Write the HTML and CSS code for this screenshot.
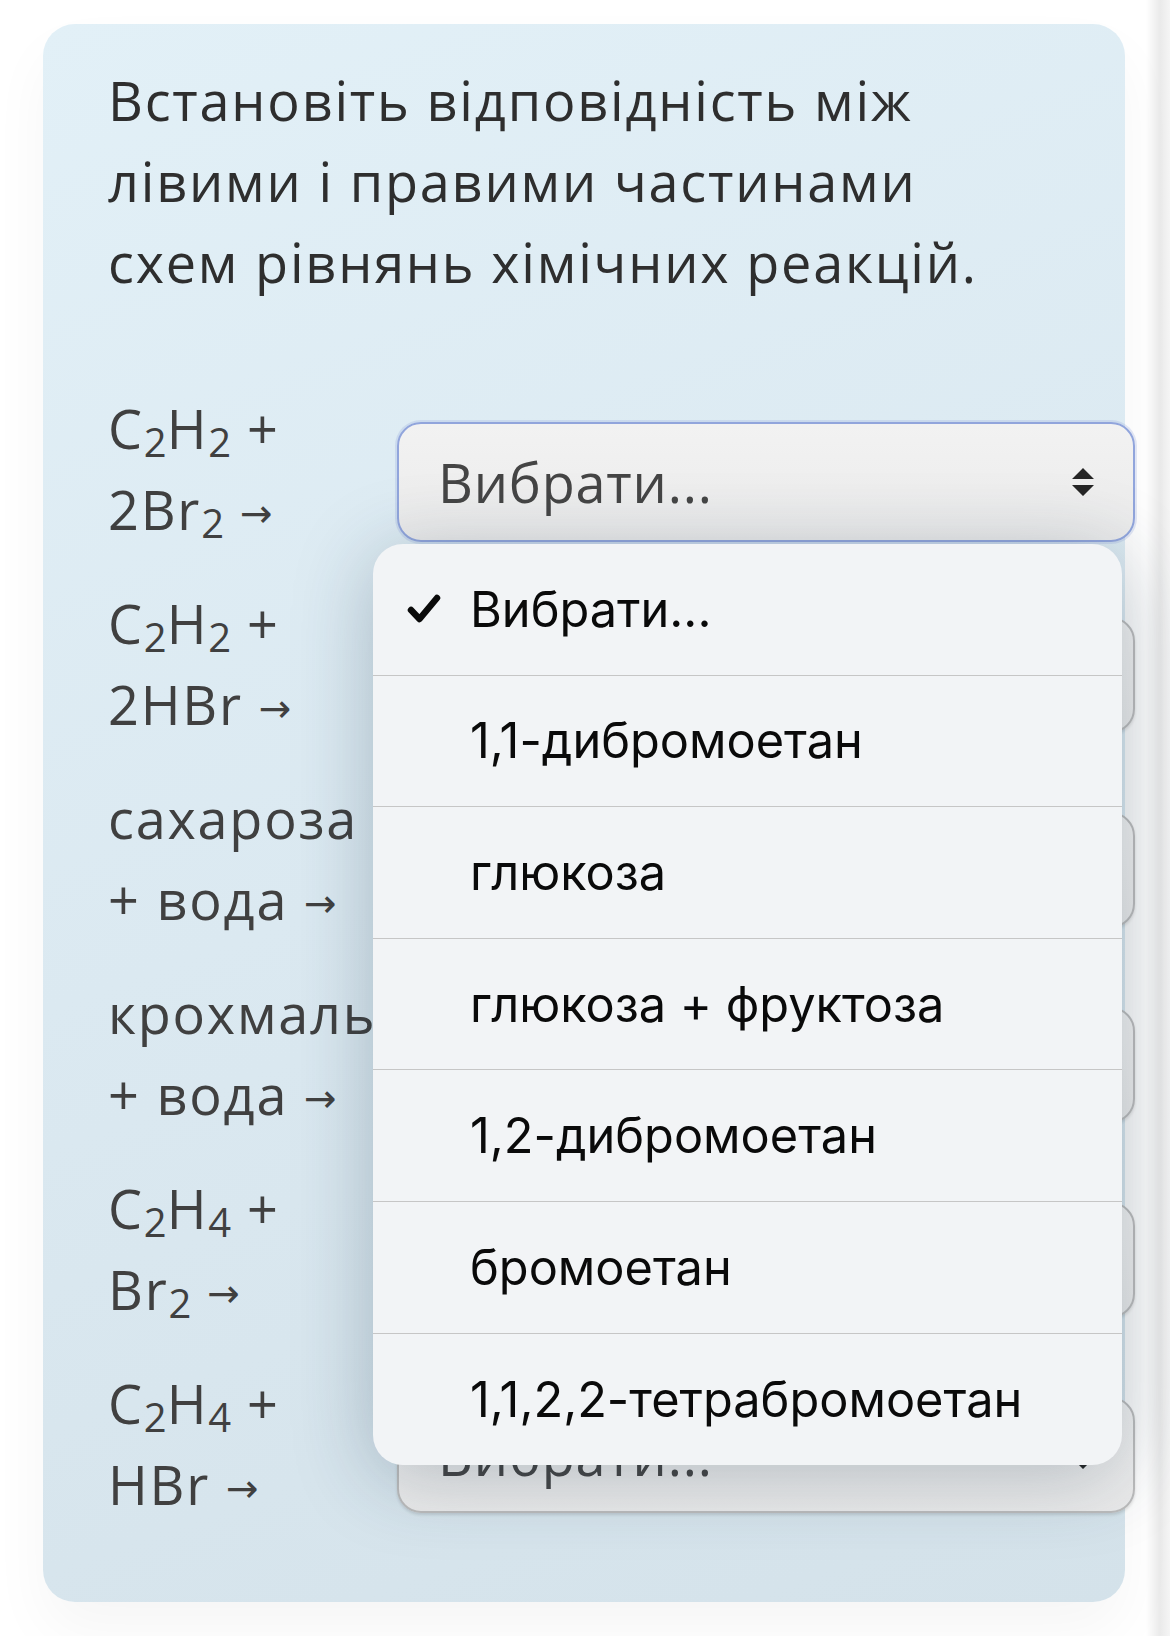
FILE: index.html
```html
<!DOCTYPE html>
<html lang="uk">
<head>
    <meta charset="UTF-8">
    <meta name="viewport" content="width=device-width, initial-scale=1.0">
    <title>Встановіть відповідність</title>
    <link rel="stylesheet" href="styles.css">
</head>
<body>
    <div class="page">
        <div class="card">
            <p class="task">Встановіть відповідність між лівими і правими частинами схем рівнянь хімічних реакцій.</p>

            <div class="pairs">
                <div class="pair">
                    <div class="formula">C<sub>2</sub>H<sub>2</sub> + 2Br<sub>2</sub> <span class="arrow">→</span></div>
                    <div class="select-wrap">
                        <div class="select focused">
                            <span>Вибрати...</span>
                            <svg class="updown" viewBox="0 0 24 30"><path d="M12 1 L23 12 L1 12 Z M1 18 L23 18 L12 29 Z"/></svg>
                        </div>

                        <!-- open picker of the first select -->
                        <ul class="picker">
                            <li class="checked">
                                <svg class="check" viewBox="0 0 34 30"><path d="M4 16 L12.5 25 L30 4"/></svg>
                                Вибрати...
                            </li>
                            <li>1,1-дибромоетан</li>
                            <li>глюкоза</li>
                            <li>глюкоза + фруктоза</li>
                            <li>1,2-дибромоетан</li>
                            <li>бромоетан</li>
                            <li>1,1,2,2-тетрабромоетан</li>
                        </ul>
                    </div>
                </div>

                <div class="pair">
                    <div class="formula">C<sub>2</sub>H<sub>2</sub> + 2HBr <span class="arrow">→</span></div>
                    <div class="select-wrap">
                        <div class="select"><span>Вибрати...</span><svg class="updown" viewBox="0 0 24 30"><path d="M12 1 L23 12 L1 12 Z M1 18 L23 18 L12 29 Z"/></svg></div>
                    </div>
                </div>

                <div class="pair">
                    <div class="formula">сахароза + вода <span class="arrow">→</span></div>
                    <div class="select-wrap">
                        <div class="select"><span>Вибрати...</span><svg class="updown" viewBox="0 0 24 30"><path d="M12 1 L23 12 L1 12 Z M1 18 L23 18 L12 29 Z"/></svg></div>
                    </div>
                </div>

                <div class="pair">
                    <div class="formula">крохмаль + вода <span class="arrow">→</span></div>
                    <div class="select-wrap">
                        <div class="select"><span>Вибрати...</span><svg class="updown" viewBox="0 0 24 30"><path d="M12 1 L23 12 L1 12 Z M1 18 L23 18 L12 29 Z"/></svg></div>
                    </div>
                </div>

                <div class="pair">
                    <div class="formula">C<sub>2</sub>H<sub>4</sub> + Br<sub>2</sub> <span class="arrow">→</span></div>
                    <div class="select-wrap">
                        <div class="select"><span>Вибрати...</span><svg class="updown" viewBox="0 0 24 30"><path d="M12 1 L23 12 L1 12 Z M1 18 L23 18 L12 29 Z"/></svg></div>
                    </div>
                </div>

                <div class="pair">
                    <div class="formula">C<sub>2</sub>H<sub>4</sub> + HBr <span class="arrow">→</span></div>
                    <div class="select-wrap">
                        <div class="select"><span>Вибрати...</span><svg class="updown" viewBox="0 0 24 30"><path d="M12 1 L23 12 L1 12 Z M1 18 L23 18 L12 29 Z"/></svg></div>
                    </div>
                </div>
            </div>
        </div>
    </div>
</body>
</html>
```

FILE: styles.css
```css
body {
    margin: 0;
    font-family: "Open Sans", "DejaVu Sans", sans-serif;
    background: linear-gradient(to right, #fff 0, #fff 1146px, #eaeaea 1160px, #f5f5f5 1170px);
}
.page {
    padding: 24px 45px 40px 43px;
}
.card {
    background: linear-gradient(160deg, #e2f0f7 0%, #dbe9f1 50%, #d4e2ea 100%);
    border-radius: 32px;
    padding: 36px 0 77px 65px;
    box-shadow: 0 30px 60px rgba(0, 0, 0, 0.04);
}
.task {
    margin: 0 0 85px 0;
    max-width: 900px;
    font-size: 54px;
    line-height: 81px;
    letter-spacing: 1.8px;
    color: #2e2e2e;
}
.pairs {
    display: flex;
    flex-direction: column;
    gap: 33px;
}
.pair {
    display: flex;
    gap: 49px;
}
.formula {
    flex: none;
    width: 240px;
    font-size: 54px;
    line-height: 81px;
    letter-spacing: 1.8px;
    color: #404040;
}
.formula sub {
    font-size: 0.74em;
    line-height: 0;
    letter-spacing: 0;
    vertical-align: -0.2em;
}
.arrow {
    font-size: 0.72em;
    line-height: 0;
    vertical-align: 0.08em;
}
.select-wrap {
    position: relative;
    flex: none;
    width: 738px;
    margin-top: 34px;
}
.select {
    box-sizing: border-box;
    height: 116px;
    display: flex;
    align-items: center;
    justify-content: space-between;
    padding: 0 38px 0 39px;
    border: 2px solid #bcbcbc;
    border-radius: 24px;
    background: linear-gradient(#f2f2f2, #ebebeb);
    box-shadow: 0 2px 3px rgba(0, 0, 0, 0.12);
    font-size: 54px;
    letter-spacing: 0.8px;
    color: #454545;
}
.select.focused {
    height: 120px;
    border-color: #91a5dc;
    box-shadow: 0 0 0 2px rgba(145, 165, 220, 0.25);
}
.updown {
    width: 24px;
    height: 30px;
    fill: #262626;
}
.picker {
    position: absolute;
    z-index: 10;
    top: 122px;
    left: -24px;
    width: 749px;
    margin: 0;
    padding: 0;
    list-style: none;
    background: #f2f4f6;
    border-radius: 30px;
    box-shadow: 0 12px 80px rgba(30, 55, 75, 0.28);
    overflow: hidden;
    font-family: Inter, "Noto Sans", sans-serif;
    font-size: 48.7px;
    color: #0a0a0a;
}
.picker li {
    position: relative;
    height: 131.6px;
    display: flex;
    align-items: center;
    padding-left: 97px;
    box-sizing: border-box;
    border-bottom: 1.5px solid #c6c6c6;
}
.picker li:last-child {
    border-bottom: none;
}
.check {
    position: absolute;
    left: 34px;
    width: 34px;
    height: 30px;
    fill: none;
    stroke: #0a0a0a;
    stroke-width: 6.5;
    stroke-linecap: round;
    stroke-linejoin: round;
}
```
